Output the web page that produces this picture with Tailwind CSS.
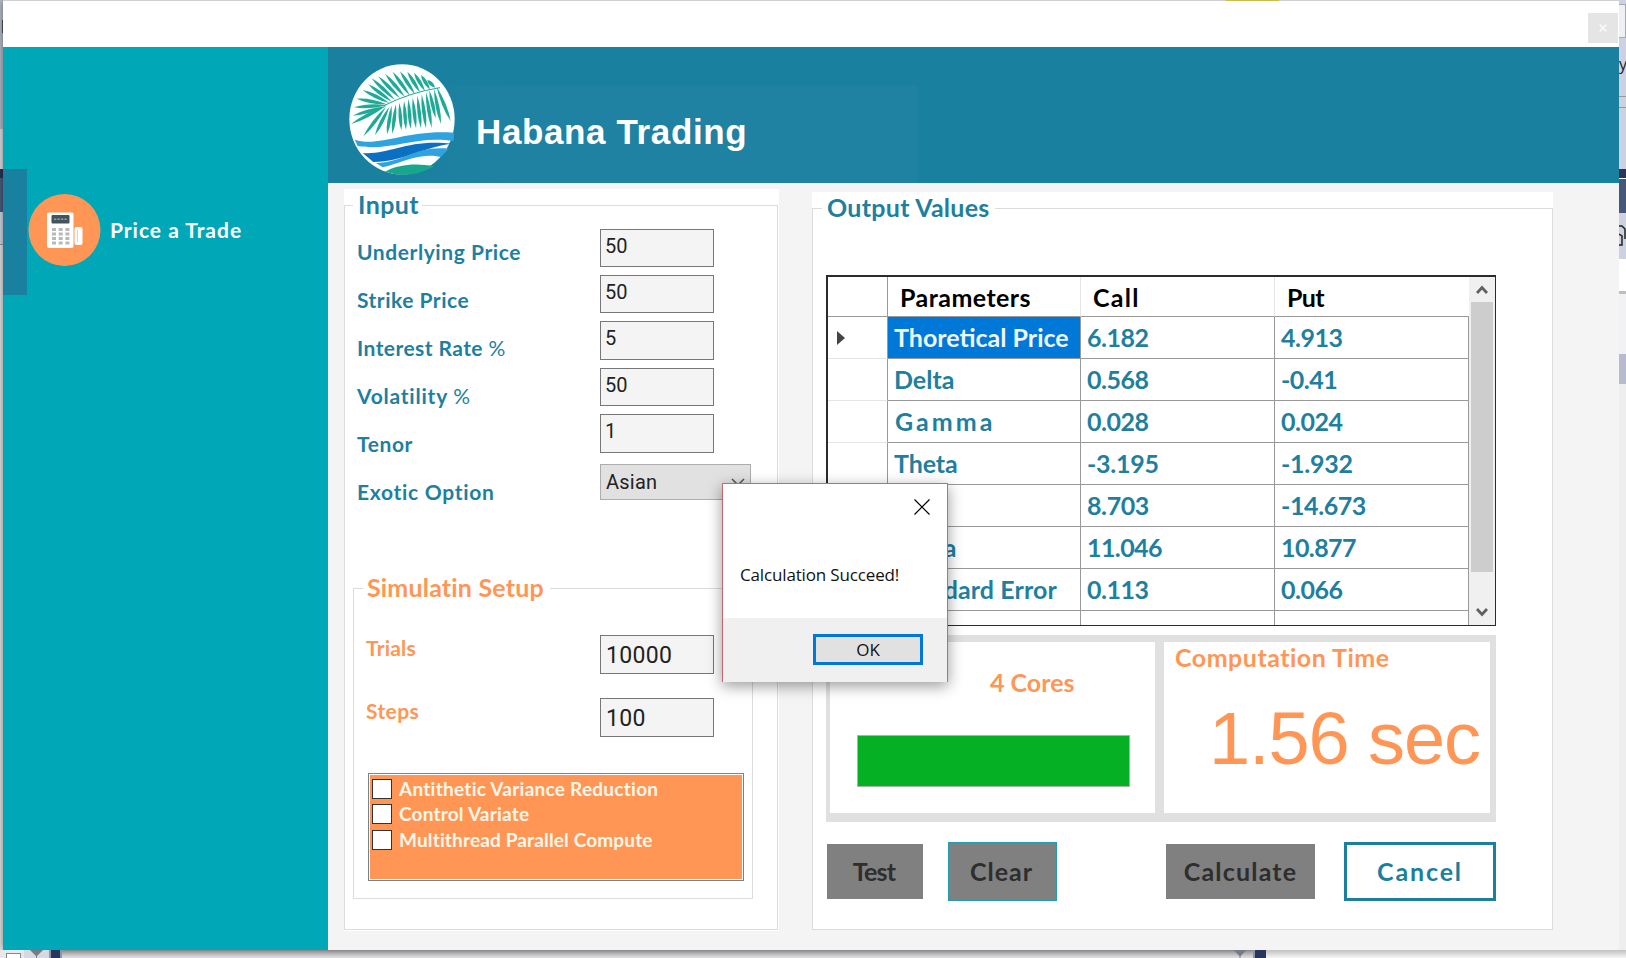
<!DOCTYPE html>
<html lang="en">
<head>
<meta charset="utf-8">
<title>Habana Trading</title>
<script src="https://cdn.jsdelivr.net/npm/@tailwindcss/browser@4"></script>
</head>
<body class="relative w-[1626px] h-[958px] overflow-hidden bg-[#e3e4e8] font-['Lato',sans-serif] font-bold text-[#1f7f9f] whitespace-nowrap">
<div class="flex h-[950px]">
  <!-- desktop strip, left -->
  <div class="w-[3px] shrink-0 flex flex-col bg-[#b9bfcc]">
    <div class="h-[20px]"></div><div class="h-[13px] ml-[2px] bg-[#555]"></div>
    <div class="h-[96px]"></div><div class="h-[40px] bg-[#e4e4e8]"></div>
    <div class="h-[9px] bg-[#27365a]"></div><div class="h-[34px] bg-[#4d5d80]"></div>
    <div class="h-[32px] bg-[#d5dbe8]"></div><div class="h-px bg-[#999]"></div><div class="grow bg-[#e8e8ea]"></div>
  </div>

  <!-- application window -->
  <div class="w-[1616px] shrink-0 flex flex-col shadow-[0_0_8px_rgba(0,0,0,0.5)] bg-[#f4f4f4]">
    <div class="h-px shrink-0 bg-[#cfcfd2]"><div class="ml-[1223px] w-[53px] h-px bg-[#d2bb4e]"></div></div>
    <div class="h-[46px] shrink-0 bg-white flex items-start justify-end pt-[12px] pr-px">
      <div class="size-[30px] bg-[#e5e5e5] flex items-center justify-center">
        <svg class="size-[8px]" viewBox="0 0 8 8" stroke="#f8f8f8" stroke-width="1.8"><path d="M.7 .7 7.3 7.3M7.3 .7 .7 7.3"/></svg>
      </div>
    </div>
    <div class="flex h-[903px]">
      <aside class="w-[325px] shrink-0 bg-[#00a8b7] pt-[122px]">
        <div class="flex items-center h-[126px]">
          <div class="w-[24px] h-[126px] bg-[#1a80a0]"></div>
          <svg class="ml-[1px] mb-[4px] size-[74px]" viewBox="0 0 74 74">
            <circle cx="36.500" cy="37" r="36" fill="#ff9655"/>
            <rect x="19" y="19.500" width="26.500" height="35.500" rx="2" fill="#fff"/>
            <rect x="46.500" y="34" width="8" height="18" rx="2" fill="#fff"/>
            <path d="M49.500 37v12" stroke="#d5d5d5" stroke-width="1"/>
            <rect x="23.500" y="22" width="18" height="8.500" rx="1" fill="#44545e"/>
            <path d="M26 26.200h13" stroke="#93a0a6" stroke-width="1.500" stroke-dasharray="2.300 1.200"/>
            <path d="M24 36.500h18M24 41h18M24 45.500h18M24 50h18" stroke="#b9b9b9" stroke-width="3" stroke-dasharray="4 2.700"/>
          </svg>
          <span class="ml-[8px] mb-[4px] text-[21px] tracking-[.98px] text-white">Price a Trade</span>
        </div>
      </aside>
      <main class="w-[1291px] flex flex-col">
        <header class="h-[136px] shrink-0 bg-[#1980a0] flex items-end">
          <div class="w-[590px] h-[97px] bg-linear-to-r from-[#1980a0] from-10% to-[#1f82a2] to-30% flex items-end">
            <svg class="ml-[12px] mb-[3px] w-[130px] h-[125px] shrink-0" viewBox="0 0 390 375">
              <ellipse cx="186" cy="193" rx="158" ry="165" fill="#fdfefe"/>
              <g id="leaves" fill="#1faa96"></g>
              <path d="M132 152Q210 112 300 98" fill="none" stroke="#1faa96" stroke-width="3"/>
              <path d="M44 254C120 278 200 222 342 233L341 258C225 240 150 290 53 273Z" fill="#2ea3df"/>
              <path d="M68 294C150 300 200 252 334 266C250 276 190 320 100 321Z" fill="#0b6fc2"/>
              <path d="M108 324C190 322 230 270 326 281L303 306C235 290 180 326 128 337Z" fill="#2ea3df"/>
              <path d="M136 350C180 325 235 325 283 334Q210 375 136 350Z" fill="#16a78d"/>
            </svg>
            <h1 class="ml-[6px] mb-[31px] text-[35px] tracking-[.62px] leading-[40px] text-white font-['Liberation_Sans',sans-serif]">Habana Trading</h1>
          </div>
        </header>
        <div class="flex items-start">
          <!-- input group -->
          <section class="ml-[16px] mt-[6px] w-[435px] h-[742px] bg-white flex flex-col">
            <div class="flex items-center h-[32px] shrink-0">
              <i class="w-[9px] h-px bg-[#dcdcdc]"></i>
              <span class="pl-[5px] mr-[3px] mb-[2px] text-[25px] tracking-[.4px] leading-[32px]">Input</span>
              <i class="grow h-px bg-[#dcdcdc] mr-[1px]"></i>
            </div>
            <div class="-mt-[16px] mr-px mb-[1px] grow border-x border-b border-[#dcdcdc] pt-[23px]">
              <div class="flex h-[288px] pl-[12px]">
                <div class="w-[243px] text-[21px] leading-[48px]">
                  <div class="tracking-[.57px]">Underlying Price</div>
                  <div class="tracking-[.5px]">Strike Price</div>
                  <div class="tracking-[.43px]">Interest Rate <b class="font-normal">%</b></div>
                  <div class="tracking-[.77px]">Volatility <b class="font-normal">%</b></div>
                  <div class="tracking-[.6px]">Tenor</div>
                  <div class="tracking-[.7px]">Exotic Option</div>
                </div>
                <div class="pt-[.6px] font-['Roboto',sans-serif] font-normal text-[20px] text-[#222] leading-[32px] *:border *:border-[#777] *:bg-[#f4f4f4]">
                  <div class="w-[114px] h-[38.500px] mb-[7.900px] px-[4px]">50</div>
                  <div class="w-[114px] h-[38.500px] mb-[7.900px] px-[4px]">50</div>
                  <div class="w-[114px] h-[38.500px] mb-[7.900px] px-[4px]">5</div>
                  <div class="w-[114px] h-[38.500px] mb-[7.900px] px-[4px]">50</div>
                  <div class="w-[114px] h-[38.500px] mb-[11.400px] px-[4px]">1</div>
                  <div class="w-[151px] h-[36px] border-[#adadad]! bg-[#e1e1e1]! px-[5px] flex items-center justify-between"><span class="tracking-[.25px]">Asian</span>
                    <svg class="w-[14px] h-[8px]" viewBox="0 0 14 8" fill="none" stroke="#555" stroke-width="1.500"><path d="M1 1 7 7 13 1"/></svg></div>
                </div>
              </div>
              <div class="mt-[56px] ml-[8px] w-[400px] h-[327px] flex flex-col text-[#ff9655]">
                <div class="flex items-center h-[32px] shrink-0">
                  <i class="w-[10px] h-px bg-[#dcdcdc]"></i>
                  <span class="pl-[4px] mr-[6px] mb-[3px] text-[25px] tracking-[.18px] leading-[32px]">Simulatin Setup</span>
                  <i class="grow h-px bg-[#dcdcdc]"></i>
                </div>
                <div class="-mt-[16px] grow border-x border-b border-[#dcdcdc] pt-[47px]">
                  <div class="flex h-[39px] pl-[12px] text-[21px]">
                    <div class="w-[234px] leading-[25px] tracking-[.2px]">Trials</div>
                    <div class="w-[114px] border border-[#777] bg-[#f4f4f4] pl-[5px] leading-[39px] font-['Roboto',sans-serif] font-normal text-[23px] tracking-[.3px] text-[#222]">10000</div>
                  </div>
                  <div class="flex h-[39px] mt-[24px] pl-[12px] text-[21px]">
                    <div class="w-[234px] leading-[25px] tracking-[.4px]">Steps</div>
                    <div class="w-[114px] border border-[#777] bg-[#f4f4f4] pl-[5px] leading-[39px] font-['Roboto',sans-serif] font-normal text-[23px] tracking-[.3px] text-[#222]">100</div>
                  </div>
                  <div class="mt-[36px] ml-[14px] w-[376px] h-[108px] border border-[#76828c] bg-white p-[1px]">
                    <div class="h-full bg-[#ff9655] pl-[2px] pt-[1px] text-[19px] text-[#fff6ea]">
                      <div class="flex items-center h-[25.500px]"><i class="size-[20px] bg-white border border-[#333] mr-[7px]"></i><span class="tracking-[.26px]">Antithetic Variance Reduction</span></div>
                      <div class="flex items-center h-[25.500px]"><i class="size-[20px] bg-white border border-[#333] mr-[7px]"></i><span class="tracking-[.2px]">Control Variate</span></div>
                      <div class="flex items-center h-[25.500px]"><i class="size-[20px] bg-white border border-[#333] mr-[7px]"></i><span class="tracking-[.15px]">Multithread Parallel Compute</span></div>
                    </div>
                  </div>
                </div>
              </div>
            </div>
          </section>

          <!-- output group -->
          <section class="ml-[33px] mt-[9px] w-[741px] h-[738px] bg-white flex flex-col">
            <div class="flex items-center h-[32px] shrink-0">
              <i class="w-[10px] h-px bg-[#dcdcdc]"></i>
              <span class="pl-[5px] mr-[5px] mb-[2px] text-[25px] tracking-[.28px] leading-[32px]">Output Values</span>
              <i class="grow h-px bg-[#dcdcdc]"></i>
            </div>
            <div class="-mt-[16px] grow border-x border-b border-[#dcdcdc] pt-[67px] pl-[13px]">
              <!-- results grid -->
              <div class="w-[670px] h-[351px] border-2 border-r border-b border-[#2b2b2b] flex overflow-hidden text-[25px]">
                <div class="w-[641px] shrink-0 grid grid-cols-[60px_193px_194px_194px] auto-rows-[42px] grid-rows-[40px] content-start leading-[41px] *:border-r *:border-b *:border-[#999]">
                  <div></div><div class="border-r-[#e5e5e5]! pl-[12px] text-black tracking-[.44px]">Parameters</div><div class="border-r-[#e5e5e5]! pl-[12px] text-black tracking-[1.3px]">Call</div><div class="border-r-0! pl-[12px] text-black tracking-[-.7px]">Put</div>
                  <div class="border-b-[#e5e5e5]! flex items-center pl-[9px]"><svg class="w-[8px] h-[14px]" viewBox="0 0 8 14"><path d="M0 0 8 7 0 14Z" fill="#444"/></svg></div><div class="bg-[#0078d7] text-[#eef6fd] pl-[6px]">Thoretical Price</div><div class="pl-[6px] tracking-[-.5px]">6.182</div><div class="pl-[6px] tracking-[-.5px]">4.913</div>
                  <div class="border-b-[#e5e5e5]!"></div><div class="pl-[6px]">Delta</div><div class="pl-[6px] tracking-[-.5px]">0.568</div><div class="pl-[6px] tracking-[-.5px]">-0.41</div>
                  <div class="border-b-[#e5e5e5]!"></div><div class="pl-[7px] tracking-[3px]">Gamma</div><div class="pl-[6px] tracking-[-.5px]">0.028</div><div class="pl-[6px] tracking-[-.5px]">0.024</div>
                  <div class="border-b-[#e5e5e5]!"></div><div class="pl-[6px] tracking-[-.1px]">Theta</div><div class="pl-[6px] tracking-[-.25px]">-3.195</div><div class="pl-[6px] tracking-[-.25px]">-1.932</div>
                  <div class="border-b-[#e5e5e5]!"></div><div class="pl-[6px]">Rho</div><div class="pl-[6px] tracking-[-.4px]">8.703</div><div class="pl-[6px] tracking-[-.4px]">-14.673</div>
                  <div class="border-b-[#e5e5e5]!"></div><div class="pl-[6px] tracking-[2.600px]">Vega</div><div class="pl-[6px] tracking-[-.6px]">11.046</div><div class="pl-[6px] tracking-[-.6px]">10.877</div>
                  <div class="border-b-[#e5e5e5]!"></div><div class="pl-[6px] tracking-[.1px]">Standard Error</div><div class="pl-[6px] tracking-[-.5px]">0.113</div><div class="pl-[6px] tracking-[-.5px]">0.066</div>
                  <div></div><div></div><div></div><div></div>
                </div>
                <div class="grow bg-[#f0f0f0] px-[2px] flex flex-col items-center">
                  <div class="h-[25px] flex items-center"><svg class="w-[12px] h-[10px]" viewBox="0 0 12 10" fill="none" stroke="#606060" stroke-width="2.800"><path d="M1 8 6 2.500 11 8"/></svg></div>
                  <div class="h-[270px] w-[22px] bg-[#cdcdcd]"></div>
                  <div class="grow"></div>
                  <div class="h-[27px] flex items-center"><svg class="w-[12px] h-[10px]" viewBox="0 0 12 10" fill="none" stroke="#606060" stroke-width="2.800"><path d="M1 2 6 7.500 11 2"/></svg></div>
                </div>
              </div>
              <!-- status panels -->
              <div class="mt-[9px] w-[670px] h-[187px] bg-[#e0e0e0] pt-[7px] pb-[9px] pl-[4px] pr-[6px] flex gap-[9px] text-[#ff9655]">
                <div class="w-[325px] shrink-0 bg-white pt-[24px] pl-[27px]">
                  <div class="pl-[133px] text-[25px] leading-[32px]">4 Cores</div>
                  <div class="mt-[37px] w-[273px] h-[52px] bg-[#06b025] border border-[#a5b8a5]"></div>
                </div>
                <div class="grow min-w-0 bg-white pl-[11px]">
                  <div class="text-[25px] tracking-[.5px] leading-[30px]">Computation Time</div>
                  <div class="mt-[25px] pl-[34px] text-[74px] leading-[84px] font-normal font-['Liberation_Sans',sans-serif] tracking-[-1.100px]">1.56 sec</div>
                </div>
              </div>
              <!-- actions -->
              <div class="mt-[20px] w-[670px] h-[59px] flex items-center text-[25px] text-[#2e2e2e]">
                <button class="w-[96px] h-[55px] ml-px pr-[2px] bg-[#808080] tracking-[-.8px]">Test</button>
                <button class="w-[109px] h-[59px] ml-[25px] pr-[2px] bg-[#808080] border border-[#1f9fae] tracking-[1px]">Clear</button>
                <button class="w-[149px] h-[55px] ml-[109px] bg-[#808080] tracking-[1.200px]">Calculate</button>
                <button class="w-[152px] h-[59px] ml-auto bg-white border-3 border-[#1a80a0] text-[#1a80a0] tracking-[1.850px]">Cancel</button>
              </div>
            </div>
          </section>
        </div>
      </main>
    </div>
  </div>

  <!-- desktop strip, right -->
  <div class="w-[7px] shrink-0 flex flex-col overflow-hidden bg-[#ccd2e2]">
    <div class="h-[4px]"></div><div class="h-[34px] bg-[#f0f0f4] border-y border-r border-[#a5a9b5]"></div>
    <div class="h-[58px] pt-[14px] font-['Open_Sans',sans-serif] font-normal text-[16px] leading-[24px] text-[#222]">y</div>
    <div class="h-[12px] border-y border-[#999]"></div><div class="h-[61px]"></div>
    <div class="h-[9px] bg-[#27365a]"></div><div class="h-px bg-white"></div><div class="h-[34px] bg-[#465878]"></div>
    <div class="h-[46px] pt-[12px]"><svg class="w-[7px] h-[22px]" viewBox="0 0 7 22" fill="none" stroke="#222" stroke-width="1.500"><path d="M0 1h3l3 3v10M0 9l3 2v9H0"/></svg></div>
    <div class="h-[32px] bg-white"></div><div class="h-[3px] bg-[#b9bdcc]"></div><div class="h-[60px] bg-[#f2f2f4]"></div>
    <div class="h-[30px] bg-[#b8bace]"></div><div class="grow bg-[#eeeeef]"></div>
  </div>
</div>
<!-- desktop strip, bottom -->
<div class="flex h-[8px] bg-linear-to-b from-[#b4b4b6] to-[#e2e2e5]">
  <div class="w-[24px] flex justify-center items-end bg-[#e8e8ea]"><i class="ml-[3px] w-[15px] h-[5px] border border-b-0 border-[#888] bg-white"></i></div>
  <div class="w-[25px] pl-[6px] bg-[#d8d9e0]"><svg class="w-[13px] h-[8px]" viewBox="0 0 13 8" fill="#777b86"><path d="M0 0h13L7 6v2H6V6Z"/></svg></div>
  <div class="w-[13px] bg-[#27365a] border-x-2 border-[#8a94ad]"></div>
  <div class="w-[1171px]"></div>
  <svg class="w-[14px] h-[8px]" viewBox="0 0 13 8" fill="#777b86"><path d="M0 0h13L7 6v2H6V6Z"/></svg>
  <div class="w-[6px]"></div>
  <div class="w-[13px] bg-[#27365a] border-l-2 border-[#8a94ad]"></div>
  <div class="grow bg-linear-to-b from-[#c0c0c0] to-[#f6f6f6]"></div>
</div>

<!-- message box -->
<div class="absolute left-[722px] top-[483px] w-[226px] h-[199px] border border-b-0 border-[#c9686c] bg-white shadow-[0_4px_14px_rgba(0,0,0,0.4)] flex flex-col font-['Open_Sans',sans-serif] font-normal text-[17px] text-[#111]">
  <div class="flex justify-end pt-[15px] pr-[17px]"><svg class="size-[16px]" viewBox="0 0 16 16" stroke="#000" stroke-width="1.200"><path d="M.5 .5 15.500 15.500M15.500 .5 .5 15.500"/></svg></div>
  <div class="mt-[47px] pl-[17px] leading-[26px] tracking-[-.15px]">Calculation Succeed!</div>
  <div class="mt-auto h-[64px] bg-[#f0f0f0] flex justify-end pt-[16px] pr-[24px]">
    <button class="w-[110px] h-[31px] border-3 border-[#0078d7] bg-[#e1e1e1] leading-[26px]">OK</button>
  </div>
</div>

<script>
// Palm leaflets: base x, base y, tip x, tip y.
const leaflets = [[138,152,33,207],[138,155,70,244],[148,155,105,240],[155,152,141,238],[168,148,157,236],[178,143,184,226],[192,138,198,224],[205,132,212,222],[218,128,228,220],[232,122,243,220],[245,118,258,220],[258,112,275,218],[282,102,303,207],[290,95,332,198],[268,106,287,190],[138,154,38,182],[140,150,42,157],[140,148,50,131],[148,144,68,105],[155,140,85,88],[165,135,95,70],[180,130,115,64],[195,126,135,56],[210,122,158,50],[225,118,180,49],[240,112,202,50],[255,108,222,53],[270,104,243,60],[285,98,262,75]];
document.getElementById('leaves').innerHTML = leaflets.map(([a,b,c,d]) => {
  const l = Math.hypot(c-a,d-b), nx = -(d-b)/l*11, ny = (c-a)/l*11, mx = a+(c-a)*.55, my = b+(d-b)*.55;
  return `<path d="M${a} ${b}Q${mx+nx} ${my+ny} ${c} ${d}Q${mx-nx} ${my-ny} ${a} ${b}Z"/>`;
}).join('');
</script>
</body>
</html>
